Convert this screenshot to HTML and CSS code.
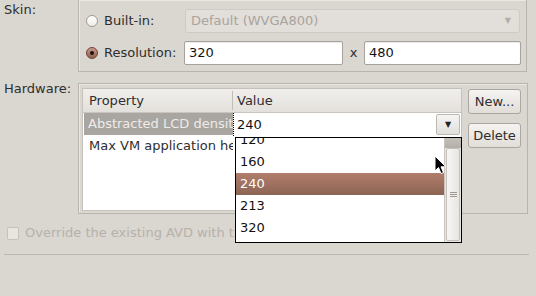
FILE: index.html
```html
<!DOCTYPE html>
<html lang="en">
<head>
    <meta charset="UTF-8">
    <title>AVD Skin and Hardware</title>
    <link rel="stylesheet" href="styles.css">
</head>
<body>
    <!-- Skin -->
    <div class="section skin">
        <div class="side-label">Skin:</div>
        <div class="group skin-group">
            <div class="opt-row">
                <div class="opt"><span class="radio"></span><span>Built-in:</span></div>
                <div class="combo disabled">
                    <span>Default (WVGA800)</span>
                    <span class="combo-arrow">&#9660;</span>
                </div>
            </div>
            <div class="opt-row">
                <div class="opt"><span class="radio on"></span><span>Resolution:</span></div>
                <div class="res">
                    <div class="field res-w">320</div>
                    <span class="res-x">x</span>
                    <div class="field res-h">480</div>
                </div>
            </div>
        </div>
    </div>

    <!-- Hardware -->
    <div class="section hardware">
        <div class="side-label">Hardware:</div>
        <div class="group hw-group">
            <div class="table">
                <div class="thead">
                    <div class="th col-prop">Property</div>
                    <div class="th col-val">Value</div>
                </div>
                <div class="tr">
                    <div class="td col-prop selected">Abstracted LCD density</div>
                    <div class="editor">
                        <span>240</span>
                        <span class="drop-btn">&#9660;</span>
                    </div>
                </div>
                <div class="tr">
                    <div class="td col-prop">Max VM application heap size</div>
                    <div class="td col-val"></div>
                </div>
            </div>
            <div class="buttons">
                <button class="btn">New...</button>
                <button class="btn">Delete</button>
            </div>
        </div>
    </div>

    <div class="override">
        <span class="checkbox"></span>
        <span>Override the existing AVD with the same name</span>
    </div>

    <div class="separator"></div>

    <!-- open dropdown of the density editor -->
    <div class="popup">
        <ul class="popup-list">
            <li>120</li>
            <li>160</li>
            <li class="current">240</li>
            <li>213</li>
            <li>320</li>
        </ul>
        <div class="scrollbar">
            <div class="scroll-top"></div>
            <div class="scroll-thumb"><span class="grip"></span></div>
        </div>
    </div>

    <svg class="cursor" width="13" height="20" viewBox="0 0 13 20">
        <path d="M1 1 L1 16 L4.5 12.5 L7 18.5 L9.5 17.5 L7 11.8 L11.8 11.8 Z" fill="#000" stroke="#fff" stroke-width="1"/>
    </svg>
</body>
</html>
```

FILE: styles.css
```css
* {
    box-sizing: border-box;
}

body {
    margin: 0;
    width: 536px;
    height: 296px;
    overflow: hidden;
    position: relative;
    background-color: #dad6d0;
    font-family: "DejaVu Sans", sans-serif;
    font-size: 13px;
    line-height: 16px;
    color: #2e2e2e;
}

.section {
    display: flex;
}

.side-label {
    width: 78px;
    flex: none;
    padding-left: 4px;
}

.skin .side-label {
    padding-top: 2px;
}

.group {
    border: 1px solid #b9b4ae;
    box-shadow: inset 1px 1px 0 #ebe8e4;
}

/* Skin */

.skin-group {
    width: 449px;
    border-top: none;
    padding: 9px 5px 6px 7px;
    display: flex;
    flex-direction: column;
    gap: 8px;
}

.opt-row {
    display: grid;
    grid-template-columns: 98px 1fr;
    align-items: center;
    height: 24px;
}

.opt {
    display: flex;
    align-items: center;
    gap: 6px;
}

.radio {
    width: 12px;
    height: 12px;
    border-radius: 50%;
    border: 1px solid #9f9a94;
    background: linear-gradient(#ffffff, #efedea);
    position: relative;
}

.radio.on {
    border-color: #6e4438;
    background: linear-gradient(#c99a8a, #94604f);
}

.radio.on::after {
    content: "";
    position: absolute;
    left: 3px;
    top: 3px;
    width: 4px;
    height: 4px;
    border-radius: 50%;
    background-color: #1d1412;
}

.combo {
    height: 24px;
    margin: 0 1px 0 1px;
    display: flex;
    align-items: center;
    justify-content: space-between;
    padding: 0 8px 0 5px;
    border: 1px solid #cfcac4;
    border-radius: 3px;
}

.combo.disabled {
    background-color: #e2ded9;
    color: #a9a49e;
}

.combo-arrow {
    font-size: 8px;
    color: #b3aea8;
}

.res {
    display: flex;
    align-items: center;
}

.field {
    height: 24px;
    padding: 0 4px;
    display: flex;
    align-items: center;
    background-color: #ffffff;
    border: 1px solid #a7a29c;
    border-radius: 2px;
    box-shadow: inset 0 1px 1px rgba(0, 0, 0, 0.08);
    color: #141414;
}

.res-w {
    width: 159px;
}

.res-x {
    width: 21px;
    text-align: center;
}

.res-h {
    flex: 1;
}

/* Hardware */

.hardware {
    margin-top: 11px;
}

.hardware .side-label {
    margin-top: -2px;
}

.hw-group {
    width: 450px;
    height: 131px;
    padding: 4px 6px 2px 3px;
    display: flex;
    gap: 6px;
}

.table {
    width: 380px;
    height: 123px;
    background-color: #ffffff;
    border: 1px solid #c6c1bb;
    overflow: hidden;
}

.thead {
    display: flex;
    height: 24px;
    background: linear-gradient(#f1efec, #e3e0dc);
    border-bottom: 1px solid #c9c4be;
}

.th {
    display: flex;
    align-items: center;
}

.thead .col-prop {
    border-right: 1px solid #c2bdb7;
    margin: 2px 0;
}

.col-prop {
    width: 150px;
    flex: none;
    padding-left: 6px;
    white-space: nowrap;
    overflow: hidden;
}

.col-val {
    flex: 1;
    padding-left: 4px;
}

.tr {
    display: flex;
    height: 22px;
}

.td {
    display: flex;
    align-items: center;
}

.td.selected {
    background-color: #a9a5a1;
    color: #eeecea;
    margin-left: 1px;
    width: 149px;
    padding-left: 4px;
}

.editor {
    flex: 1;
    height: 23px;
    display: flex;
    align-items: center;
    justify-content: space-between;
    padding-left: 3px;
    border-left: 1px dotted #000000;
    background-color: #ffffff;
    color: #111111;
    position: relative;
    z-index: 1;
}

.drop-btn {
    width: 24px;
    height: 21px;
    margin-right: 1px;
    display: flex;
    align-items: center;
    justify-content: center;
    font-size: 8px;
    color: #222222;
    border: 1px solid #bdb8b2;
    border-radius: 2px;
    background: linear-gradient(#f6f5f3, #e2dfdb);
}

.buttons {
    display: flex;
    flex-direction: column;
    gap: 9px;
    margin-top: 1px;
}

.btn {
    width: 53px;
    height: 25px;
    padding: 0;
    font-family: inherit;
    font-size: 13px;
    color: #2e2e2e;
    border: 1px solid #aba69f;
    border-radius: 3px;
    background: linear-gradient(#f5f4f2, #e1ddd8);
}

/* Bottom */

.override {
    display: flex;
    align-items: center;
    gap: 6px;
    margin-top: 11px;
    padding-left: 7px;
    color: #b6b1ab;
    white-space: nowrap;
}

.checkbox {
    width: 12px;
    height: 13px;
    border: 1px solid #c7c2bc;
    border-radius: 2px;
    background-color: #e9e6e2;
}

.separator {
    margin: 13px 7px 0 4px;
    border-top: 1px solid #bcb7b1;
}

/* Popup */

.popup {
    position: absolute;
    left: 235px;
    top: 137px;
    width: 227px;
    height: 106px;
    border: 1px solid #000000;
    background-color: #ffffff;
    display: flex;
    overflow: hidden;
}

.popup-list {
    list-style: none;
    margin: -9px 0 0 0;
    padding: 0;
    flex: 1;
}

.popup-list li {
    height: 22px;
    line-height: 22px;
    padding-left: 4px;
    color: #111111;
}

.popup-list li.current {
    background: linear-gradient(#b27d6b, #8c6454);
    color: #ffffff;
}

.scrollbar {
    width: 17px;
    display: flex;
    flex-direction: column;
    background-color: #e9e6e2;
    border-left: 1px solid #c9c4be;
}

.scroll-top {
    height: 10px;
    background: linear-gradient(#c4bfb9, #b3aea8);
}

.scroll-thumb {
    flex: 1;
    margin: 0 1px 1px 1px;
    background: linear-gradient(90deg, #f7f6f4, #e9e6e2);
    border: 1px solid #c4bfb9;
    border-radius: 2px;
    display: flex;
    align-items: center;
    justify-content: center;
}

.grip {
    width: 7px;
    height: 5px;
    border-top: 1px solid #9e9993;
    border-bottom: 1px solid #9e9993;
    position: relative;
}

.grip::after {
    content: "";
    position: absolute;
    left: 0;
    right: 0;
    top: 1px;
    border-top: 1px solid #9e9993;
}

.cursor {
    position: absolute;
    left: 434px;
    top: 155px;
}
```
